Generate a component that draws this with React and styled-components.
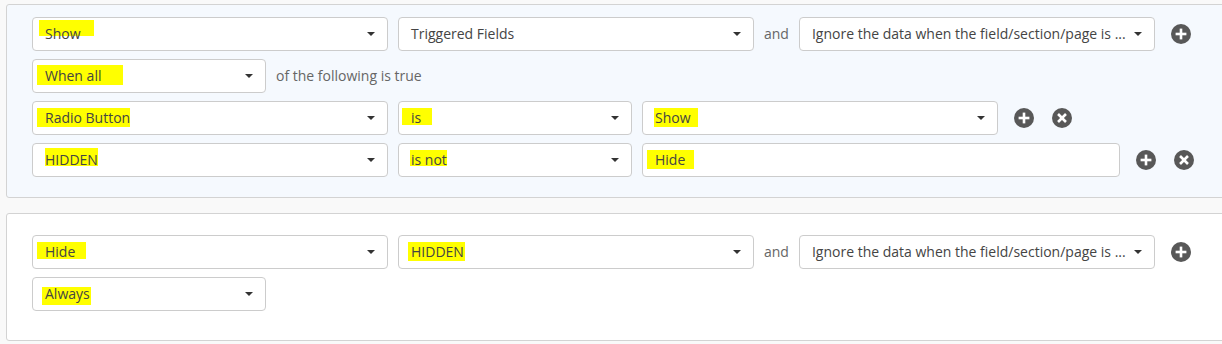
import React from 'react';
import styled, { createGlobalStyle } from 'styled-components';

const Global = createGlobalStyle`
  html, body { margin: 0; padding: 0; background: #f9f9f9; }
  body {
    font-family: "Open Sans", "Liberation Sans", sans-serif;
    font-size: 14px;
    color: #444;
    overflow: hidden;
  }
`;

const Page = styled.div`
  width: 1222px;
  height: 344px;
  overflow: hidden;
  box-sizing: border-box;
  padding: 4px 0 0 6px;
  display: flex;
  flex-direction: column;
  gap: 15px;
`;

const Card = styled.div`
  width: 1240px;
  flex: none;
  box-sizing: border-box;
  border: 1px solid #d3d3d3;
  border-radius: 3px;
  background: ${p => p.$bg};
  padding: ${p => p.$pt}px 0 ${p => p.$pb}px 25px;
  display: flex;
  flex-direction: column;
  gap: 8px;
`;

const Row = styled.div`
  display: flex;
  align-items: center;
  gap: 10px;
  height: 34px;
`;

const SelectBox = styled.div`
  width: ${p => p.$w}px;
  height: 34px;
  flex: none;
  box-sizing: border-box;
  border: 1px solid #cccccc;
  border-radius: 4px;
  background: #fff;
  padding: 0 12px 0 12px;
  display: flex;
  align-items: center;
  justify-content: space-between;
  line-height: 20px;
  color: #444;
  white-space: nowrap;
`;

const InputBox = styled(SelectBox)`
  justify-content: flex-start;
`;

const Caret = styled.span`
  width: 0;
  height: 0;
  border-left: 4px solid transparent;
  border-right: 4px solid transparent;
  border-top: 4px solid #333;
  flex: none;
  margin-left: 8px;
`;

const Label = styled.span`
  color: #666;
  line-height: 20px;
  white-space: nowrap;
`;

const Mark = styled.span`
  position: relative;
  z-index: 0;
  &::before {
    content: '';
    position: absolute;
    z-index: -1;
    background: #ffff00;
    left: ${p => p.$l}px;
    right: ${p => p.$r}px;
    top: ${p => p.$t}px;
    bottom: ${p => p.$b}px;
  }
`;

const IconButton = styled.span`
  width: 20px;
  height: 20px;
  flex: none;
  display: inline-flex;
  margin-left: ${p => p.$ml}px;
  cursor: pointer;
`;

const PlusIcon = ({ ml }) => (
  <IconButton $ml={ml}>
    <svg width="20" height="20" viewBox="0 0 20 20">
      <circle cx="10" cy="10" r="10" fill="#585858" />
      <rect x="8.7" y="4.6" width="2.6" height="10.8" fill="#fff" />
      <rect x="4.6" y="8.7" width="10.8" height="2.6" fill="#fff" />
    </svg>
  </IconButton>
);

const CloseIcon = ({ ml }) => (
  <IconButton $ml={ml}>
    <svg width="20" height="20" viewBox="0 0 20 20">
      <circle cx="10" cy="10" r="10" fill="#585858" />
      <g transform="rotate(45 10 10)">
        <rect x="8.7" y="4.4" width="2.6" height="11.2" fill="#fff" />
        <rect x="4.4" y="8.7" width="11.2" height="2.6" fill="#fff" />
      </g>
    </svg>
  </IconButton>
);

const Select = ({ w, children }) => (
  <SelectBox $w={w}>
    <span>{children}</span>
    <Caret />
  </SelectBox>
);

const M = ({ l, r, t, b, children }) => (
  <Mark $l={l} $r={r} $t={t} $b={b}>{children}</Mark>
);

export default function App() {
  return (
    <>
      <Global />
      <Page>
        <Card $bg="#f5f9fe" $pt={12} $pb={20}>
          <Row>
            <Select w={356}><M l={-6} r={-13} t={-4} b={7}>Show</M></Select>
            <Select w={356}>Triggered Fields</Select>
            <Label>and</Label>
            <Select w={356}>Ignore the data when the field/section/page is ...</Select>
            <PlusIcon ml={6} />
          </Row>
          <Row>
            <Select w={234}><M l={-8} r={-22} t={-1} b={0}>When all</M></Select>
            <Label>of the following is true</Label>
          </Row>
          <Row>
            <Select w={356}><M l={-8} r={0} t={0} b={0}>Radio Button</M></Select>
            <Select w={234}><M l={-9} r={-11} t={0} b={2}>is</M></Select>
            <Select w={356}><M l={-1} r={-7} t={0} b={0}>Show</M></Select>
            <PlusIcon ml={6} />
            <CloseIcon ml={8} />
          </Row>
          <Row>
            <Select w={356}><M l={0} r={0} t={-2} b={3}>HIDDEN</M></Select>
            <Select w={234}><M l={-1} r={0} t={0} b={3}>is not</M></Select>
            <InputBox $w={478}><M l={-8} r={-9} t={0} b={1}>Hide</M></InputBox>
            <PlusIcon ml={6} />
            <CloseIcon ml={8} />
          </Row>
        </Card>
        <Card $bg="#ffffff" $pt={21} $pb={29}>
          <Row>
            <Select w={356}><M l={-8} r={-11} t={0} b={2}>Hide</M></Select>
            <Select w={356}><M l={-3} r={-1} t={0} b={0}>HIDDEN</M></Select>
            <Label>and</Label>
            <Select w={356}>Ignore the data when the field/section/page is ...</Select>
            <PlusIcon ml={6} />
          </Row>
          <Row>
            <Select w={234}><M l={-3} r={-1} t={3} b={-2}>Always</M></Select>
          </Row>
        </Card>
      </Page>
    </>
  );
}
